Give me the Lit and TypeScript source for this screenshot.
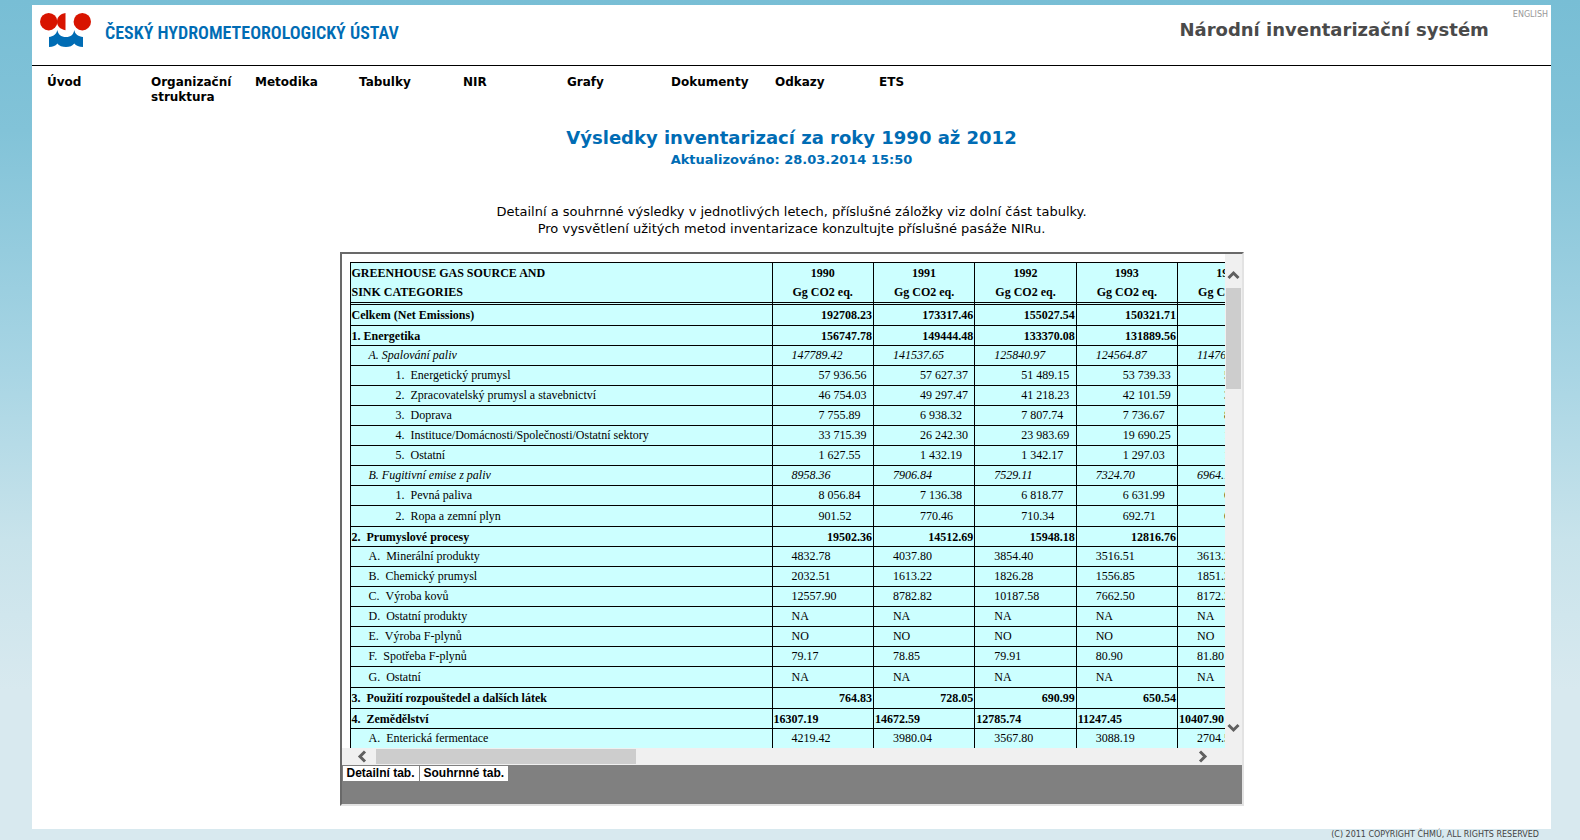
import { LitElement, html, css } from "lit";
import { customElement } from "lit/decorators.js";

type Kind = "top" | "topleft" | "sub" | "italic" | "leaf";
interface Row {
  kind: Kind;
  label: string;
  values: string[];
  tall?: boolean;
}

const N = "\u00a0\u00a0";
const MENU = ["Úvod", "Organizační struktura", "Metodika", "Tabulky", "NIR", "Grafy", "Dokumenty", "Odkazy", "ETS"];
const YEARS = ["1990", "1991", "1992", "1993", "1994"];
const ROWS: Row[] = [
  { kind: "top", tall: true, label: "Celkem (Net Emissions)", values: ["192708.23", "173317.46", "155027.54", "150321.71", ""] },
  { kind: "top", label: "1. Energetika", values: ["156747.78", "149444.48", "133370.08", "131889.56", ""] },
  { kind: "italic", label: "A. Spalování paliv", values: ["147789.42", "141537.65", "125840.97", "124564.87", "114764.21"] },
  { kind: "leaf", label: `1.${N}Energetický prumysl`, values: ["57 936.56", "57 627.37", "51 489.15", "53 739.33", "54 110.20"] },
  { kind: "leaf", label: `2.${N}Zpracovatelský prumysl a stavebnictví`, values: ["46 754.03", "49 297.47", "41 218.23", "42 101.59", "33 215.80"] },
  { kind: "leaf", label: `3.${N}Doprava`, values: ["7 755.89", "6 938.32", "7 807.74", "7 736.67", "8 105.32"] },
  { kind: "leaf", label: `4.${N}Instituce/Domácnosti/Společnosti/Ostatní sektory`, values: ["33 715.39", "26 242.30", "23 983.69", "19 690.25", "18 012.44"] },
  { kind: "leaf", label: `5.${N}Ostatní`, values: ["1 627.55", "1 432.19", "1 342.17", "1 297.03", "1 320.45"] },
  { kind: "italic", label: "B. Fugitivní emise z paliv", values: ["8958.36", "7906.84", "7529.11", "7324.70", "6964.19"] },
  { kind: "leaf", label: `1.${N}Pevná paliva`, values: ["8 056.84", "7 136.38", "6 818.77", "6 631.99", "6 271.06"] },
  { kind: "leaf", tall: true, label: `2.${N}Ropa a zemní plyn`, values: ["901.52", "770.46", "710.34", "692.71", "693.13"] },
  { kind: "top", label: `2.${N}Prumyslové procesy`, values: ["19502.36", "14512.69", "15948.18", "12816.76", ""] },
  { kind: "sub", label: `A.${N}Minerální produkty`, values: ["4832.78", "4037.80", "3854.40", "3516.51", "3613.27"] },
  { kind: "sub", label: `B.${N}Chemický prumysl`, values: ["2032.51", "1613.22", "1826.28", "1556.85", "1851.32"] },
  { kind: "sub", label: `C.${N}Výroba kovů`, values: ["12557.90", "8782.82", "10187.58", "7662.50", "8172.24"] },
  { kind: "sub", label: `D.${N}Ostatní produkty`, values: ["NA", "NA", "NA", "NA", "NA"] },
  { kind: "sub", label: `E.${N}Výroba F-plynů`, values: ["NO", "NO", "NO", "NO", "NO"] },
  { kind: "sub", label: `F.${N}Spotřeba F-plynů`, values: ["79.17", "78.85", "79.91", "80.90", "81.80"] },
  { kind: "sub", tall: true, label: `G.${N}Ostatní`, values: ["NA", "NA", "NA", "NA", "NA"] },
  { kind: "top", tall: true, label: `3.${N}Použití rozpouštedel a dalších látek`, values: ["764.83", "728.05", "690.99", "650.54", ""] },
  { kind: "topleft", label: `4.${N}Zemědělství`, values: ["16307.19", "14672.59", "12785.74", "11247.45", "10407.90"] },
  { kind: "sub", label: `A.${N}Enterická fermentace`, values: ["4219.42", "3980.04", "3567.80", "3088.19", "2704.51"] },
];

@customElement("inventory-sheet")
export class InventorySheet extends LitElement {
  static styles = css`
    :host {
      display: block;
    }
    .frame {
      box-sizing: border-box;
      width: 904px;
      max-width: 100%;
      border: 2px solid;
      border-color: #696969 #e3e3e3 #e3e3e3 #696969;
      background: #808080;
    }
    .body {
      display: grid;
      grid-template-columns: minmax(0, 1fr) 17px;
      grid-template-rows: 494px 17px;
      background: #f0f0f0;
    }
    .view {
      overflow: hidden;
      padding: 8px 0 0 8px;
      background: #fff;
    }
    table {
      table-layout: fixed;
      width: 930px;
      border-collapse: separate;
      border-spacing: 0;
      border-left: 1px solid #000;
      border-top: 1px solid #000;
      background: #ccffff;
      color: #000;
      font: 12px/16px "Liberation Serif", "Times New Roman", serif;
    }
    .label {
      width: 422px;
    }
    th,
    td {
      box-sizing: border-box;
      height: 20px;
      padding: 0 1px;
      border-right: 1px solid #000;
      border-bottom: 1px solid #000;
      font-weight: normal;
      text-align: left;
      white-space: nowrap;
      overflow: hidden;
    }
    .tall > * {
      height: 21px;
    }
    .head > * {
      height: 42px;
      line-height: 19px;
      font-weight: bold;
      text-align: center;
      border-bottom: 3px double #000;
    }
    .head > :first-child {
      text-align: left;
    }
    .top > *,
    .topleft > * {
      font-weight: bold;
    }
    .top > td {
      text-align: right;
      padding-right: 1px;
    }
    .italic > * {
      font-style: italic;
    }
    .sub > *,
    .italic > *,
    .leaf > * {
      padding-bottom: 1px;
    }
    .sub > th,
    .italic > th {
      padding-left: 18px;
    }
    .sub > td,
    .italic > td {
      padding-left: 19px;
    }
    .leaf > th {
      padding-left: 45px;
    }
    .leaf > td {
      padding-left: 46px;
    }
    .bar {
      display: flex;
      align-items: center;
    }
    .vertical {
      flex-direction: column;
      padding: 12px 0;
    }
    .horizontal {
      grid-column: 1 / -1;
      padding: 0 30px 0 12px;
    }
    .arrow {
      flex: none;
      display: block;
      border: 0;
      padding: 0;
      background: none;
      width: 18px;
      height: 17px;
    }
    .vertical .arrow {
      width: 17px;
      height: 18px;
    }
    .arrow svg {
      display: block;
      margin: auto;
    }
    .track {
      flex: 1;
      align-self: stretch;
      padding: 1px 4px;
    }
    .vertical .track {
      padding: 4px 1px;
    }
    .thumb {
      background: #cdcdcd;
      width: 32%;
      height: 15px;
    }
    .vertical .thumb {
      width: 15px;
      height: 101px;
    }
    .tabs {
      display: flex;
      gap: 1px;
      height: 39px;
      padding: 1px 1px 0;
      box-sizing: border-box;
      align-items: flex-start;
    }
    .tab {
      border: 0;
      margin: 0;
      padding: 0 4px;
      background: #fff;
      color: #000;
      font: bold 12px/15px "Liberation Sans", Arial, sans-serif;
    }
  `;

  private arrow(name: string, turn: number) {
    return html`<button class="arrow" aria-label=${name}>
      <svg width="13" height="13" viewBox="-6.5 -6.5 13 13" aria-hidden="true">
        <path d="M-5 2.5 L0 -2.5 L5 2.5" transform="rotate(${turn})" fill="none" stroke="#606060" stroke-width="3" />
      </svg>
    </button>`;
  }

  render() {
    return html`
      <div class="frame">
        <div class="body">
          <div class="view">
            <table>
              <thead>
                <tr class="head">
                  <th class="label" scope="col">GREENHOUSE GAS SOURCE AND<br />SINK CATEGORIES</th>
                  ${YEARS.map((y) => html`<th scope="col">${y}<br />Gg CO2 eq.</th>`)}
                </tr>
              </thead>
              <tbody>
                ${ROWS.map(
                  (r) => html`<tr class="${r.kind} ${r.tall ? "tall" : ""}">
                    <th scope="row">${r.label}</th>
                    ${r.values.map((v) => html`<td>${v}</td>`)}
                  </tr>`
                )}
              </tbody>
            </table>
          </div>
          <div class="bar vertical">
            ${this.arrow("Nahoru", 0)}
            <div class="track"><div class="thumb"></div></div>
            ${this.arrow("Dolů", 180)}
          </div>
          <div class="bar horizontal">
            ${this.arrow("Vlevo", -90)}
            <div class="track"><div class="thumb"></div></div>
            ${this.arrow("Vpravo", 90)}
          </div>
        </div>
        <div class="tabs">
          <button class="tab">Detailní tab.</button>
          <button class="tab">Souhrnné tab.</button>
        </div>
      </div>
    `;
  }
}

@customElement("app-root")
export class AppRoot extends LitElement {
  static styles = css`
    :host {
      display: block;
      box-sizing: border-box;
      min-height: 100vh;
      padding: 5px 29px 0 32px;
      background: linear-gradient(#78bed5, #82c3d8 130px, #a8d5e4 370px, #c8e3eb 540px, #d8e9ef 690px);
      color: #000;
      font-family: Verdana, "DejaVu Sans", sans-serif;
      font-size: 13px;
    }
    a {
      color: inherit;
      text-decoration: none;
    }
    .page {
      background: #fff;
      padding-bottom: 23px;
    }
    header {
      display: flex;
      align-items: flex-start;
      height: 60px;
      border-bottom: 1px solid #000;
    }
    .brand {
      display: flex;
      align-items: flex-start;
      gap: 14px;
      padding: 8px 0 0 8px;
      color: #006cb4;
      font: 600 18px/40px "Liberation Sans Narrow", "Roboto Condensed", "Liberation Sans", sans-serif;
    }
    .system {
      margin: 13px 24px 0 auto;
      font-size: 18px;
      line-height: 24px;
      color: #4a4a4a;
    }
    .lang {
      margin: 4px 3px 0 0;
      font-size: 8px;
      line-height: 12px;
      color: #999;
    }
    nav {
      display: flex;
      padding: 9px 15px 0;
      height: 48px;
      box-sizing: border-box;
      font-size: 12px;
      font-weight: bold;
      line-height: 15px;
    }
    nav a {
      box-sizing: border-box;
      width: 104px;
      padding-right: 16px;
    }
    main {
      display: flex;
      flex-direction: column;
      align-items: center;
      padding: 12px 16px 0;
      text-align: center;
    }
    h1 {
      margin: 0;
      font-size: 18px;
      line-height: 24px;
      color: #006cb4;
    }
    h2 {
      margin: 0;
      font-size: 13px;
      line-height: 20px;
      color: #006cb4;
    }
    p {
      margin: 33px 0 15px;
      line-height: 17px;
    }
    inventory-sheet {
      max-width: 100%;
    }
    footer {
      padding-right: 12px;
      text-align: right;
      font-size: 8px;
      line-height: 11px;
      color: #444;
    }
  `;

  render() {
    return html`
      <div class="page">
        <header>
          <a class="brand" href="#">
            <svg width="51" height="34" viewBox="0 0 51 34" aria-hidden="true">
              <g fill="#d81400">
                <circle cx="8.7" cy="8.7" r="8.7" />
                <circle cx="42.3" cy="8.7" r="8.7" />
                <path d="M25.5 0 V17.2 C20 16.2 17 13 17 8.7 C17 4 20 1 25.5 0Z" />
              </g>
              <path
                fill="#006cb4"
                d="M9 34 V24 C13 23.5 16.500 21.500 17.300 17 C18.200 21.500 21 24 26 24 C31 24 33.500 21.500 34.300 17 C35 21.500 38.500 23.500 43 24 V34 C39 33.800 36 33 34.300 30.500 C32.500 33 29.500 34 26 34 C22.500 34 19 33 17.300 30.500 C16 33 13 33.800 9 34Z"
              />
            </svg>
            <span>ČESKÝ HYDROMETEOROLOGICKÝ ÚSTAV</span>
          </a>
          <strong class="system">Národní inventarizační systém</strong>
          <a class="lang" href="#">ENGLISH</a>
        </header>
        <nav>${MENU.map((m) => html`<a href="#">${m}</a>`)}</nav>
        <main>
          <h1>Výsledky inventarizací za roky 1990 až 2012</h1>
          <h2>Aktualizováno: 28.03.2014 15:50</h2>
          <p>
            Detailní a souhrnné výsledky v jednotlivých letech, příslušné záložky viz dolní část tabulky.<br />
            Pro vysvětlení užitých metod inventarizace konzultujte příslušné pasáže NIRu.
          </p>
          <inventory-sheet></inventory-sheet>
        </main>
      </div>
      <footer>(C) 2011 COPYRIGHT ČHMÚ, ALL RIGHTS RESERVED</footer>
    `;
  }
}
